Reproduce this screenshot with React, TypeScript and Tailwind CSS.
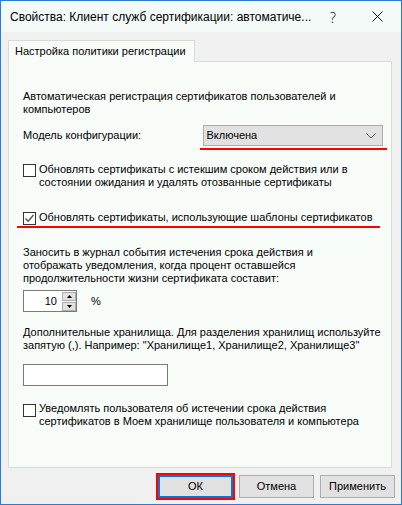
import React from "react";

const F = { fontFamily: '"Liberation Sans", Arial, sans-serif' };

function Check({ checked = false }: { checked?: boolean }) {
  return (
    <div className="w-[13px] h-[13px] border border-[#333333] bg-white shrink-0 flex items-center justify-center">
      {checked && (
        <svg width="11" height="11" viewBox="0 0 11 11">
          <path d="M1.5 5.5 L4.2 8.3 L9.5 2" fill="none" stroke="#555" strokeWidth="1.4" />
        </svg>
      )}
    </div>
  );
}

function Btn({ children, def = false }: { children: React.ReactNode; def?: boolean }) {
  return (
    <div
      className={
        "w-[75px] h-[23px] bg-[#e1e1e1] flex items-center justify-center text-[11px] text-black " +
        (def ? "border-2 border-[#0078d7]" : "border border-[#adadad]")
      }
    >
      {children}
    </div>
  );
}

export default function App() {
  return (
    <div
      className="w-[402px] h-[505px] border border-[#2b7bd4] flex flex-col bg-[#f0f0f0] text-black overflow-hidden"
      style={F}
    >
      {/* Title bar */}
      <div className="h-[31px] bg-[#f3faf7] flex items-center shrink-0 relative">
        <div className="pl-[9px] text-[12px] text-black" style={F}>
          Свойства: Клиент служб сертификации: автоматиче...
        </div>
        <div className="absolute left-[329px] top-[6px] text-[14px] text-[#222]" style={{ fontFamily: '"Noto Sans", sans-serif', fontWeight: 300 }}>
          ?
        </div>
        <svg className="absolute left-[371px] top-[10px]" width="11" height="11" viewBox="0 0 11 11">
          <path d="M0.5 0.5 L10.5 10.5 M10.5 0.5 L0.5 10.5" stroke="#111" strokeWidth="1" />
        </svg>
      </div>

      {/* Body */}
      <div className="flex-1 flex flex-col pl-[7px]">
        {/* Tab */}
        <div className="mt-[8px] w-[187px] h-[22px] border border-b-0 border-[#d9d9d9] bg-[#f8fcf9] flex items-center pl-[6px] text-[11px] relative z-10 -mb-px">
          Настройка политики регистрации
        </div>
        {/* Pane */}
        <div className="w-[384px] h-[407px] border border-[#d9d9d9] bg-[#f8fcf9] flex flex-col pl-[14px] pr-[8px] pt-[28px] text-[11px] leading-[13px]">
          <div>
            Автоматическая регистрация сертификатов пользователей и
            <br />
            компьютеров
          </div>

          <div className="mt-[9px] flex items-center relative">
            <div className="w-[181px]">Модель конфигурации:</div>
            <div className="w-[180px] h-[21px] bg-[#e1e1e1] border border-[#adadad] flex items-center pl-[2px] pr-[6px] justify-between">
              <span>Включена</span>
              <svg width="10" height="6" viewBox="0 0 10 6">
                <path d="M0.5 0.5 L5 5 L9.5 0.5" fill="none" stroke="#606060" strokeWidth="1" />
              </svg>
            </div>
            <div className="absolute left-[177px] top-[23px] w-[187px] h-[2px] bg-[#ff0000]" />
          </div>

          <div className="mt-[17px] flex gap-[3px]">
            <div className="pt-px">
              <Check />
            </div>
            <div>
              Обновлять сертификаты с истекшим сроком действия или в
              <br />
              состоянии ожидания и удалять отозванные сертификаты
            </div>
          </div>

          <div className="mt-[22px] flex gap-[3px] relative">
            <div className="pt-px">
              <Check checked />
            </div>
            <div>Обновлять сертификаты, использующие шаблоны сертификатов</div>
            <div className="absolute left-[-6px] top-[15px] w-[363px] h-[2px] bg-[#ff0000]" />
          </div>

          <div className="mt-[21px]">
            Заносить в журнал события истечения срока действия и
            <br />
            отображать уведомления, когда процент оставшейся
            <br />
            продолжительности жизни сертификата составит:
          </div>

          <div className="mt-[5px] flex items-center">
            <div className="w-[54px] h-[22px] border border-[#7a7a7a] bg-white flex items-center">
              <div className="w-[37px] text-right pr-[4px]">10</div>
              <div className="flex flex-col gap-px ml-px">
                <div className="w-[14px] h-[9px] bg-[#e1e1e1] border border-[#adadad] flex items-center justify-center">
                  <svg width="5" height="3" viewBox="0 0 5 3">
                    <path d="M0 3 L2.5 0 L5 3 Z" fill="#000" />
                  </svg>
                </div>
                <div className="w-[14px] h-[9px] bg-[#e1e1e1] border border-[#adadad] flex items-center justify-center">
                  <svg width="5" height="3" viewBox="0 0 5 3">
                    <path d="M0 0 L2.5 3 L5 0 Z" fill="#000" />
                  </svg>
                </div>
              </div>
            </div>
            <div className="ml-[14px]">%</div>
          </div>

          <div className="mt-[14px]">
            Дополнительные хранилища. Для разделения хранилищ используйте
            <br />
            запятую (,). Например: "Хранилище1, Хранилище2, Хранилище3"
          </div>

          <div className="mt-[12px] w-[145px] h-[22px] border border-[#7a7a7a] bg-white" />

          <div className="mt-[16px] flex gap-[3px]">
            <div className="pt-[2px]">
              <Check />
            </div>
            <div>
              Уведомлять пользователя об истечении срока действия
              <br />
              сертификатов в Моем хранилище пользователя и компьютера
            </div>
          </div>
        </div>

        {/* Buttons */}
        <div className="mt-[5px] flex items-center justify-end pr-[6px] gap-[4px]">
          <div className="border-2 border-[#ff0000]">
            <Btn def>ОК</Btn>
          </div>
          <Btn>Отмена</Btn>
          <div className="ml-[2px]">
            <Btn>Применить</Btn>
          </div>
        </div>
      </div>
    </div>
  );
}
